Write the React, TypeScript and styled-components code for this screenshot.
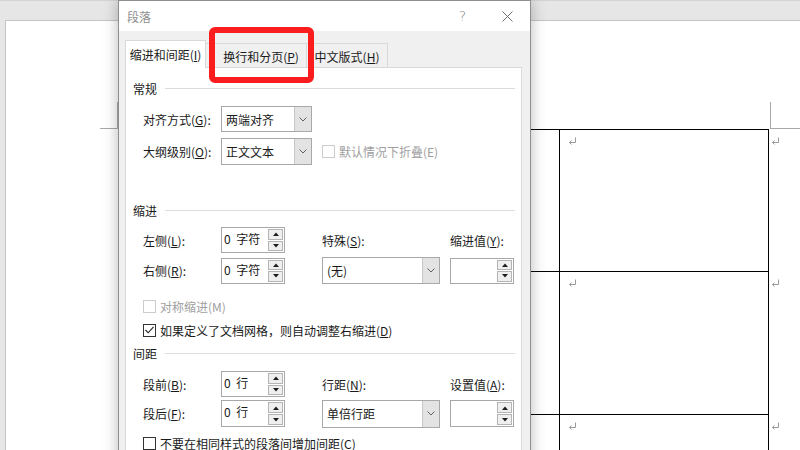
import styled, { createGlobalStyle } from "styled-components";

const GlobalStyle = createGlobalStyle`
  html, body { margin: 0; padding: 0; }
  body { background: #e6e6e6; font-family: "Noto Sans CJK SC", "Microsoft YaHei", sans-serif; }
  * { box-sizing: border-box; }
`;

const Screen = styled.div`
  position: relative;
  width: 800px;
  height: 450px;
  overflow: hidden;
  display: flex;
  flex-direction: column;
  background: #e6e6e6;
  font-family: "Noto Sans CJK SC", sans-serif;
  font-size: 12px;
  color: #1a1a1a;
`;

const TopStrip = styled.div`
  height: 5px;
  background: #f3f3f3;
  border-bottom: 1px solid #d4d4d4;
`;

const Workspace = styled.div`
  flex: 1;
  display: flex;
  padding: 19px 0 0 5px;
`;

const Page = styled.div`
  flex: 1;
  background: #fff;
  border-top: 1px solid #c4c4c4;
  border-left: 1px solid #c4c4c4;
  padding: 81px 0 0 94px;
`;

const MarkRow = styled.div`
  display: flex;
  height: 27px;
`;

const CornerMark = styled.div<{ $side: "left" | "right" }>`
  width: ${(p) => (p.$side === "left" ? "18px" : "40px")};
  margin-left: ${(p) => (p.$side === "left" ? "0" : "652px")};
  border-bottom: 1px solid #a8a8a8;
  ${(p) => (p.$side === "left" ? "border-right" : "border-left")}: 1px solid #a8a8a8;
`;

const TableRow = styled.div<{ $h: number }>`
  display: flex;
  height: ${(p) => p.$h}px;
  margin-left: 18px;
`;

const WideCell = styled.div`
  width: 441px;
  border-top: 1px solid #000;
  border-left: 1px solid #000;
`;

const NarrowCell = styled.div`
  width: 210px;
  border-top: 1px solid #000;
  border-left: 1px solid #000;
  border-right: 1px solid #000;
  padding: 7px 0 0 8px;
`;

const EndCell = styled.div`
  padding: 8px 0 0 2px;
`;

const ReturnMark = () => (
  <svg width="9" height="8" viewBox="0 0 9 8" style={{ display: "block" }}>
    <path d="M7.5 0.5 V5.5 H1.5" fill="none" stroke="#9a9a9a" strokeWidth="1" />
    <path d="M3.5 3.5 L1.5 5.5 L3.5 7.5" fill="none" stroke="#9a9a9a" strokeWidth="1" />
  </svg>
);

/* ---------- dialog ---------- */

const Dialog = styled.div`
  position: absolute;
  left: 118px;
  top: 0;
  width: 413px;
  height: 470px;
  display: flex;
  flex-direction: column;
  background: #f0f0f0;
  border: 1px solid #8e8e8e;
  box-shadow: 0 0 14px rgba(0, 0, 0, 0.28);
  z-index: 2;
`;

const TitleBar = styled.div`
  height: 30px;
  display: flex;
  align-items: center;
  background: #fff;
  padding-left: 8px;
`;

const Title = styled.span`
  flex: 1;
  color: #8f8f8f;
  font-size: 12px;
`;

const TitleButton = styled.div`
  width: 45px;
  height: 30px;
  display: flex;
  align-items: center;
  justify-content: center;
  color: #808080;
  font-size: 14px;
  font-family: "DejaVu Sans", sans-serif;
  font-weight: 300;
`;

const DialogBody = styled.div`
  flex: 1;
  display: flex;
  flex-direction: column;
  padding: 9px 8px 0 6px;
`;

const TabStrip = styled.div`
  display: flex;
  align-items: flex-end;
  height: 27px;
`;

const Tab = styled.div<{ $active?: boolean; $w: number; $pl?: number }>`
  width: ${(p) => p.$w}px;
  height: ${(p) => (p.$active ? 28 : 24)}px;
  margin-bottom: ${(p) => (p.$active ? -1 : 0)}px;
  position: relative;
  z-index: ${(p) => (p.$active ? 1 : 0)};
  display: flex;
  align-items: center;
  justify-content: center;
  padding-top: ${(p) => (p.$active ? 0 : 2)}px;
  padding-left: ${(p) => p.$pl ?? 0}px;
  background: ${(p) => (p.$active ? "#fff" : "#f0f0f0")};
  border: 1px solid #d9d9d9;
  border-bottom: none;
  margin-left: ${(p) => (p.$active ? 0 : -1)}px;
  white-space: nowrap;
`;

const Panel = styled.div`
  flex: 1;
  background: #fff;
  border: 1px solid #d9d9d9;
  padding: 10px 6px 0 7px;
  display: flex;
  flex-direction: column;
`;

const SectionHead = styled.div<{ $mt: number }>`
  display: flex;
  align-items: center;
  height: 20px;
  margin-top: ${(p) => p.$mt}px;
  &::after {
    content: "";
    flex: 1;
    height: 1px;
    background: #dcdcdc;
    margin-left: 8px;
  }
`;

const Row = styled.div<{ $mt: number; $h: number }>`
  display: flex;
  align-items: center;
  height: ${(p) => p.$h}px;
  margin-top: ${(p) => p.$mt}px;
  padding-left: 10px;
  white-space: nowrap;
`;

const Label = styled.span<{ $w: number }>`
  width: ${(p) => p.$w}px;
  flex-shrink: 0;
`;

const SelectBox = styled.div<{ $w: number; $h?: number }>`
  width: ${(p) => p.$w}px;
  height: ${(p) => p.$h ?? 26}px;
  display: flex;
  border: 1px solid #a8a8a8;
  background: #fff;
  flex-shrink: 0;
`;

const SelectText = styled.span`
  flex: 1;
  display: flex;
  align-items: center;
  padding-left: 4px;
`;

const DropButton = styled.span`
  width: 17px;
  display: flex;
  align-items: center;
  justify-content: center;
  background: #e3e3e3;
  border-left: 1px solid #c8c8c8;
`;

const Chevron = () => (
  <svg width="8" height="5" viewBox="0 0 8 5">
    <polyline points="0.5,0.5 4,4 7.5,0.5" fill="none" stroke="#606060" strokeWidth="1" />
  </svg>
);

const SpinBox = styled.div<{ $h?: number }>`
  width: 64px;
  height: ${(p) => p.$h ?? 26}px;
  display: flex;
  border: 1px solid #a8a8a8;
  background: #fff;
  flex-shrink: 0;
`;

const SpinText = styled.span`
  flex: 1;
  padding: 2px 0 0 2px;
  line-height: 18px;
  word-spacing: 3px;
`;

const SpinButtons = styled.span`
  width: 16px;
  display: flex;
  flex-direction: column;
  gap: 1px;
  padding: 1px 1px 1px 0;
`;

const SpinButton = styled.span`
  flex: 1;
  display: flex;
  align-items: center;
  justify-content: center;
  background: #efefef;
  border: 1px solid #b4b4b4;
`;

const Arrow = ({ up }: { up?: boolean }) => (
  <svg width="6" height="4" viewBox="0 0 6 4">
    <polygon points={up ? "0,4 3,0.5 6,4" : "0,0 3,3.5 6,0"} fill="#1e1e1e" />
  </svg>
);

const Spinner = ({ value, h }: { value?: string; h?: number }) => (
  <SpinBox $h={h}>
    <SpinText>{value}</SpinText>
    <SpinButtons>
      <SpinButton>
        <Arrow up />
      </SpinButton>
      <SpinButton>
        <Arrow />
      </SpinButton>
    </SpinButtons>
  </SpinBox>
);

const Select = ({ value, w, h }: { value: string; w: number; h?: number }) => (
  <SelectBox $w={w} $h={h}>
    <SelectText>{value}</SelectText>
    <DropButton>
      <Chevron />
    </DropButton>
  </SelectBox>
);

const CheckWrap = styled.label<{ $disabled?: boolean; $ml?: number }>`
  display: flex;
  align-items: center;
  gap: 4px;
  margin-left: ${(p) => p.$ml ?? 0}px;
  color: ${(p) => (p.$disabled ? "#a0a0a0" : "#1a1a1a")};
`;

const Box = styled.span<{ $disabled?: boolean }>`
  width: 13px;
  height: 13px;
  display: flex;
  align-items: center;
  justify-content: center;
  border: 1px solid ${(p) => (p.$disabled ? "#cccccc" : "#333")};
  background: #fff;
`;

const Check = ({
  text,
  checked,
  disabled,
  ml,
}: {
  text: React.ReactNode;
  checked?: boolean;
  disabled?: boolean;
  ml?: number;
}) => (
  <CheckWrap $disabled={disabled} $ml={ml}>
    <Box $disabled={disabled}>
      {checked && (
        <svg width="9" height="8" viewBox="0 0 9 8">
          <polyline points="0.5,4 3.2,6.8 8.5,0.8" fill="none" stroke="#222" strokeWidth="1.1" />
        </svg>
      )}
    </Box>
    <span>{text}</span>
  </CheckWrap>
);

const Gap = styled.span<{ $w: number }>`
  width: ${(p) => p.$w}px;
  flex-shrink: 0;
`;

const Highlight = styled.div`
  position: absolute;
  left: 209px;
  top: 27px;
  width: 105px;
  height: 56px;
  border: 6px solid #fb1d1d;
  border-radius: 6px;
  z-index: 3;
`;

export default function App() {
  return (
    <Screen>
      <GlobalStyle />
      <TopStrip />
      <Workspace>
        <Page>
          <MarkRow>
            <CornerMark $side="left" />
            <CornerMark $side="right" />
          </MarkRow>
          {[142, 143, 143].map((h, i) => (
            <TableRow key={i} $h={h}>
              <WideCell />
              <NarrowCell>
                <ReturnMark />
              </NarrowCell>
              <EndCell>
                <ReturnMark />
              </EndCell>
            </TableRow>
          ))}
        </Page>
      </Workspace>

      <Dialog>
        <TitleBar>
          <Title>段落</Title>
          <TitleButton>?</TitleButton>
          <TitleButton>
            <svg width="11" height="11" viewBox="0 0 11 11">
              <path d="M0.5 0.5 L10.5 10.5 M10.5 0.5 L0.5 10.5" stroke="#707070" strokeWidth="1" />
            </svg>
          </TitleButton>
        </TitleBar>
        <DialogBody>
          <TabStrip>
            <Tab $active $w={81}>
              缩进和间距(<u>I</u>)
            </Tab>
            <Tab $w={102} $pl={10}>
              换行和分页(<u>P</u>)
            </Tab>
            <Tab $w={82}>
              中文版式(<u>H</u>)
            </Tab>
          </TabStrip>
          <Panel>
            <SectionHead $mt={0}>常规</SectionHead>
            <Row $mt={8} $h={26}>
              <Label $w={78}>
                对齐方式(<u>G</u>):
              </Label>
              <Select value="两端对齐" w={91} />
            </Row>
            <Row $mt={6} $h={27}>
              <Label $w={78}>
                大纲级别(<u>O</u>):
              </Label>
              <Select value="正文文本" w={91} h={27} />
              <Check text="默认情况下折叠(E)" disabled ml={10} />
            </Row>

            <SectionHead $mt={35}>缩进</SectionHead>
            <Row $mt={7} $h={26}>
              <Label $w={78}>
                左侧(<u>L</u>):
              </Label>
              <Spinner value="0 字符" />
              <Gap $w={37} />
              <Label $w={128}>
                特殊(<u>S</u>):
              </Label>
              <Label $w={64}>
                缩进值(<u>Y</u>):
              </Label>
            </Row>
            <Row $mt={4} $h={27}>
              <Label $w={78}>
                右侧(<u>R</u>):
              </Label>
              <Spinner value="0 字符" />
              <Gap $w={37} />
              <Select value="(无)" w={118} h={27} />
              <Gap $w={10} />
              <Spinner />
            </Row>
            <Row $mt={12} $h={20}>
              <Check text="对称缩进(M)" disabled />
            </Row>
            <Row $mt={4} $h={20}>
              <Check
                checked
                text={
                  <>
                    如果定义了文档网格，则自动调整右缩进(<u>D</u>)
                  </>
                }
              />
            </Row>

            <SectionHead $mt={3}>间距</SectionHead>
            <Row $mt={8} $h={26}>
              <Label $w={78}>
                段前(<u>B</u>):
              </Label>
              <Spinner value="0 行" />
              <Gap $w={37} />
              <Label $w={128}>
                行距(<u>N</u>):
              </Label>
              <Label $w={64}>
                设置值(<u>A</u>):
              </Label>
            </Row>
            <Row $mt={3} $h={27}>
              <Label $w={78}>
                段后(<u>F</u>):
              </Label>
              <Spinner value="0 行" h={27} />
              <Gap $w={37} />
              <Select value="单倍行距" w={118} h={28} />
              <Gap $w={10} />
              <Spinner h={27} />
            </Row>
            <Row $mt={6} $h={20}>
              <Check
                text={
                  <>
                    不要在相同样式的段落间增加间距(<u>C</u>)
                  </>
                }
              />
            </Row>
          </Panel>
        </DialogBody>
      </Dialog>
      <Highlight />
    </Screen>
  );
}
